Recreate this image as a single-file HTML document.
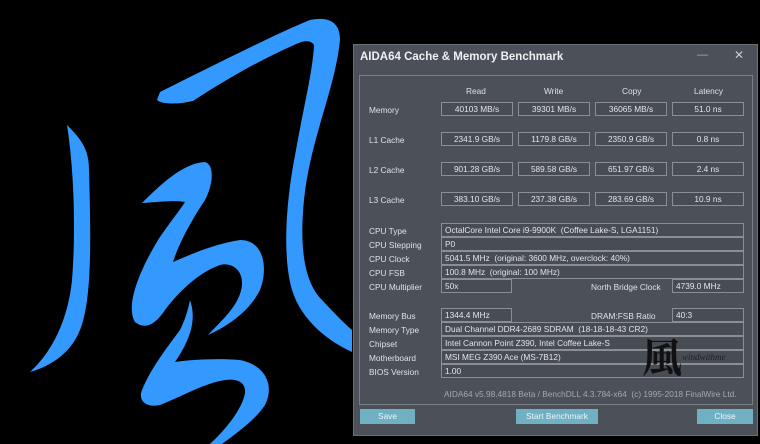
<!DOCTYPE html>
<html><head><meta charset="utf-8"><style>
*{margin:0;padding:0;box-sizing:border-box}
body{width:760px;height:444px;background:#000;position:relative;overflow:hidden;font-family:"Liberation Sans",sans-serif;}
.win{position:absolute;left:353px;top:44px;width:405px;height:392px;background:#4b5059;border:1px solid #6a6f77;}
.t{position:absolute;color:#dfe2e6;font-size:8.3px;white-space:nowrap}
.b{position:absolute;border:1px solid #8a8f96;background:#474c55;color:#e3e5e8;font-size:8.3px;line-height:12px;height:14px;white-space:nowrap}
.c{text-align:center}
.l{padding-left:3px}
.btn{position:absolute;background:#6fb1c2;color:#eef6f8;font-size:8.3px;text-align:center;line-height:15px;height:15px}
</style></head><body>
<svg width="360" height="444" style="position:absolute;left:0;top:0" viewBox="0 0 360 444">
<g fill="#3399ff">
<path d="M67 125 C82 140 89 150 89 170 C91 240 92 300 80 330 C72 350 55 365 30 372 C52 352 68 320 72 280 C76 230 74 170 67 125Z"/>
<path d="M160 92 C220 62 280 32 310 20 C330 16 340 23 340 40 C335 90 310 140 304 200 C300 240 302 280 322 300 C336 315 346 325 352 330 L352 352 C330 342 302 322 292 290 C282 255 286 200 296 150 C303 110 313 70 314 45 C311 40 304 40 294 45 C260 60 225 80 193 101 C180 104 163 105 157 100 Z"/>
<path d="M142 203 C165 180 185 163 205 162 C215 165 213 185 205 200 C195 215 180 240 173 262 C190 255 210 245 240 240 C265 240 268 270 260 290 C250 310 230 325 208 335 C222 320 240 305 242 285 C243 270 232 262 220 265 C200 272 180 290 165 310 C155 325 145 330 135 322 C125 305 140 270 158 240 C168 225 180 210 185 202 C175 200 160 202 142 203Z"/>
<path d="M190 300 C197 320 190 340 175 362 C190 360 215 358 240 360 C265 365 275 385 265 405 C255 420 238 432 222 444 L210 444 C225 430 242 410 245 393 C246 383 238 378 225 380 C205 383 185 395 160 405 C145 408 138 400 142 390 C150 370 165 350 180 330 C185 320 188 310 190 300Z"/>
</g></svg>
<div class="win">
<div class="t" style="left:6px;top:6px;font-size:11.5px;font-weight:bold;color:#eef0f2">AIDA64 Cache &amp; Memory Benchmark</div>
<div class="t" style="left:343px;top:4px;font-size:11px;color:#aab">&#8212;</div>
<div class="t" style="left:380px;top:3px;font-size:12px;color:#c8cbd0">&#10005;</div>
<div style="position:absolute;left:5px;top:30px;width:394px;height:330px;border:1px solid #7a7f86"></div>
<div class="t" style="left:112px;top:41px">Read</div>
<div class="t" style="left:190px;top:41px">Write</div>
<div class="t" style="left:268px;top:41px">Copy</div>
<div class="t" style="left:340px;top:41px">Latency</div>

<div class="t" style="left:15px;top:60px">Memory</div>
<div class="b c" style="left:87px;top:57px;width:72px">40103 MB/s</div>
<div class="b c" style="left:164px;top:57px;width:72px">39301 MB/s</div>
<div class="b c" style="left:241px;top:57px;width:72px">36065 MB/s</div>
<div class="b c" style="left:318px;top:57px;width:72px">51.0 ns</div>

<div class="t" style="left:15px;top:90px">L1 Cache</div>
<div class="b c" style="left:87px;top:87px;width:72px">2341.9 GB/s</div>
<div class="b c" style="left:164px;top:87px;width:72px">1179.8 GB/s</div>
<div class="b c" style="left:241px;top:87px;width:72px">2350.9 GB/s</div>
<div class="b c" style="left:318px;top:87px;width:72px">0.8 ns</div>

<div class="t" style="left:15px;top:120px">L2 Cache</div>
<div class="b c" style="left:87px;top:117px;width:72px">901.28 GB/s</div>
<div class="b c" style="left:164px;top:117px;width:72px">589.58 GB/s</div>
<div class="b c" style="left:241px;top:117px;width:72px">651.97 GB/s</div>
<div class="b c" style="left:318px;top:117px;width:72px">2.4 ns</div>

<div class="t" style="left:15px;top:150px">L3 Cache</div>
<div class="b c" style="left:87px;top:147px;width:72px">383.10 GB/s</div>
<div class="b c" style="left:164px;top:147px;width:72px">237.38 GB/s</div>
<div class="b c" style="left:241px;top:147px;width:72px">283.69 GB/s</div>
<div class="b c" style="left:318px;top:147px;width:72px">10.9 ns</div>

<div class="t" style="left:15px;top:181px">CPU Type</div>
<div class="b l" style="left:87px;top:178px;width:303px">OctalCore Intel Core i9-9900K &nbsp;(Coffee Lake-S, LGA1151)</div>
<div class="t" style="left:15px;top:195px">CPU Stepping</div>
<div class="b l" style="left:87px;top:192px;width:303px">P0</div>
<div class="t" style="left:15px;top:209px">CPU Clock</div>
<div class="b l" style="left:87px;top:206px;width:303px">5041.5 MHz &nbsp;(original: 3600 MHz, overclock: 40%)</div>
<div class="t" style="left:15px;top:223px">CPU FSB</div>
<div class="b l" style="left:87px;top:220px;width:303px">100.8 MHz &nbsp;(original: 100 MHz)</div>
<div class="t" style="left:15px;top:237px">CPU Multiplier</div>
<div class="b l" style="left:87px;top:234px;width:71px">50x</div>
<div class="t" style="left:237px;top:237px">North Bridge Clock</div>
<div class="b l" style="left:318px;top:234px;width:72px">4739.0 MHz</div>

<div class="t" style="left:15px;top:266px">Memory Bus</div>
<div class="b l" style="left:87px;top:263px;width:71px">1344.4 MHz</div>
<div class="t" style="left:237px;top:266px">DRAM:FSB Ratio</div>
<div class="b l" style="left:318px;top:263px;width:72px">40:3</div>
<div class="t" style="left:15px;top:280px">Memory Type</div>
<div class="b l" style="left:87px;top:277px;width:303px">Dual Channel DDR4-2689 SDRAM &nbsp;(18-18-18-43 CR2)</div>
<div class="t" style="left:15px;top:294px">Chipset</div>
<div class="b l" style="left:87px;top:291px;width:303px">Intel Cannon Point Z390, Intel Coffee Lake-S</div>
<div class="t" style="left:15px;top:308px">Motherboard</div>
<div class="b l" style="left:87px;top:305px;width:303px">MSI MEG Z390 Ace (MS-7B12)</div>
<div class="t" style="left:15px;top:322px">BIOS Version</div>
<div class="b l" style="left:87px;top:319px;width:303px">1.00</div>
<div class="t" style="left:90px;top:344px;color:#a4a9b0">AIDA64 v5.98.4818 Beta / BenchDLL 4.3.784-x64 &nbsp;(c) 1995-2018 FinalWire Ltd.</div>

<div class="t" style="left:288px;top:282px;font-family:'Noto Serif CJK SC',serif;font-weight:bold;font-size:40px;color:#111">&#39080;</div>
<div class="t" style="left:328px;top:307px;font-family:'Liberation Serif',serif;font-style:italic;font-size:9px;color:#222">windwithme</div>

<div class="btn" style="left:6px;top:364px;width:55px">Save</div>
<div class="btn" style="left:162px;top:364px;width:82px">Start Benchmark</div>
<div class="btn" style="left:343px;top:364px;width:56px">Close</div>
</div>
</body></html>
